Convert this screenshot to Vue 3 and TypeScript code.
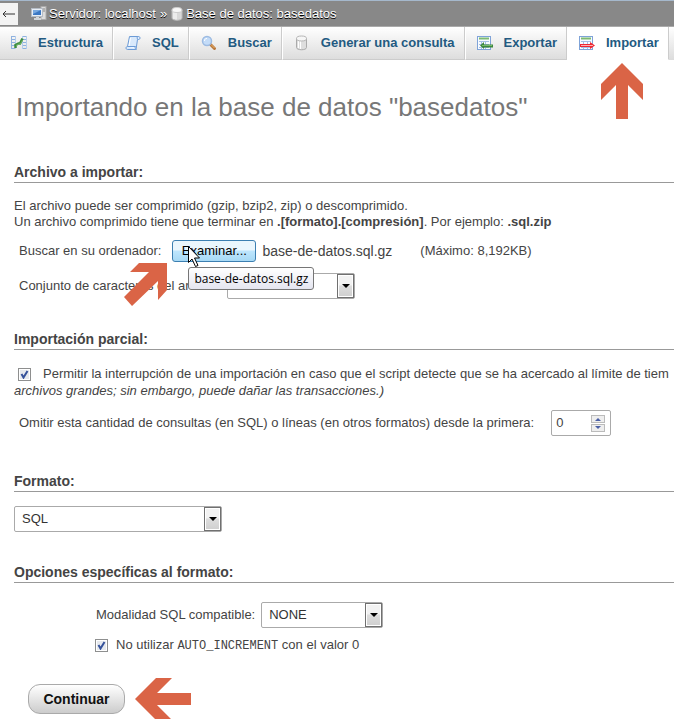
<script setup lang="ts">
import { ref } from 'vue'

interface Tab {
  label: string
  icon: 'structure' | 'sql' | 'search' | 'query' | 'export' | 'import'
}

const tabs: Tab[] = [
  { label: 'Estructura', icon: 'structure' },
  { label: 'SQL', icon: 'sql' },
  { label: 'Buscar', icon: 'search' },
  { label: 'Generar una consulta', icon: 'query' },
  { label: 'Exportar', icon: 'export' },
  { label: 'Importar', icon: 'import' },
]

const activeTab = ref('Importar')
const fileName = ref('base-de-datos.sql.gz')
const charset = ref('utf-8')
const allowInterrupt = ref(true)
const skipQueries = ref(0)
const format = ref('SQL')
const compat = ref('NONE')
const noAutoIncrement = ref(true)

function step(delta: number) {
  skipQueries.value = Math.max(0, skipQueries.value + delta)
}
</script>

<template>
  <div class="page">
    <header class="crumbs">
      <button class="back" type="button" aria-label="Ocultar panel">
        <svg width="14" height="8" viewBox="0 0 14 8" aria-hidden="true">
          <path d="M1 4h12M4 1L1 4l3 3" fill="none" stroke="#333" />
        </svg>
      </button>
      <svg class="server-icon" width="16" height="16" viewBox="0 0 16 16" aria-hidden="true">
        <rect x="10" y="0.5" width="5" height="13" fill="#dcdcdc" stroke="#aaa" />
        <path d="M11 3h3M11 5h3" stroke="#888" />
        <rect x="0.5" y="2.5" width="11" height="8" fill="#e8eef5" stroke="#b5bcc5" />
        <rect x="2" y="4" width="8" height="5" fill="#3b78c4" />
        <path d="M2 4h8L2 8z" fill="#78a9e0" />
        <path d="M5 11h3v1h2v2H3v-2h2z" fill="#d0d4d8" />
      </svg>
      <a href="#" class="crumb">Servidor: localhost</a>
      <span class="crumb sep">»</span>
      <svg class="db-icon" width="12" height="14" viewBox="0 0 12 14" aria-hidden="true">
        <path d="M1 3v8c0 3 10 3 10 0V3z" fill="#d9d9d9" stroke="#bbb" />
        <path d="M3 5v7M5 5.500v7" stroke="#fff" />
        <ellipse cx="6" cy="3" rx="5" ry="2.500" fill="#f8f8f8" stroke="#ccc" />
      </svg>
      <a href="#" class="crumb">Base de datos: basedatos</a>
    </header>

    <nav class="tabs">
      <a
        v-for="tab in tabs"
        :key="tab.label"
        href="#"
        class="tab"
        :class="{ active: tab.label === activeTab }"
        @click.prevent="activeTab = tab.label"
      >
        <svg width="16" height="16" viewBox="0 0 16 16" aria-hidden="true">
          <template v-if="tab.icon === 'structure'">
            <path d="M0.500 1v13M0.500 1.500h4M0.500 4.500h4M0.500 7.500h4M0.500 10.500h4M0.500 13.500h4M11 1.500h4M11 4.500h4M11 7.500h4M11 10.500h4M11 13.500h4" fill="none" stroke="#8fb2df" />
            <path d="M4.500 1v13M11.500 1v13M15.500 1v13" stroke="#b4cdec" />
            <path d="M4.500 13V10l3-1.500 1.500 0 2.500-5" fill="none" stroke="#3d8c3d" stroke-width="2.500" />
            <path d="M5 10.500l3-1.500 1.500 0 2-4" fill="none" stroke="#72b566" />
          </template>
          <template v-else-if="tab.icon === 'sql'">
            <path d="M4.500 1.500h9c2 0 2 3 0 3h-1L11 14.500H2.500c-2 0-2-3 0-3z" fill="#d9e9fb" stroke="#6c9bd6" />
            <path d="M2.500 11.500h8c-1 1 0 3 1 3M13.500 1.500c-2 0-1.500 3 0 3" fill="#eef6ff" stroke="#6c9bd6" />
            <path d="M5.500 3L4 11" stroke="#fff" />
          </template>
          <template v-else-if="tab.icon === 'search'">
            <path d="M9.500 9.500l4 4" stroke="#b9773b" stroke-width="3" stroke-linecap="round" />
            <path d="M10 9.500l3.500 3.500" stroke="#e8b56e" />
            <circle cx="6" cy="6" r="4.500" fill="#c4dcf8" stroke="#9dbbe2" stroke-width="1.500" />
            <path d="M3.500 6c0-2 1-2.500 2.500-2.500" fill="none" stroke="#fff" />
          </template>
          <template v-else-if="tab.icon === 'query'">
            <path d="M2.500 3.500v9c0 3 10 3 10 0v-9z" fill="#dedede" stroke="#aaa" />
            <path d="M4.500 5v8M6.500 6v8" stroke="#fff" />
            <ellipse cx="7.500" cy="3.500" rx="5" ry="2.500" fill="#f6f6f6" stroke="#b5b5b5" />
          </template>
          <template v-else>
            <rect x="0.500" y="1.500" width="13" height="13" fill="#f7fbff" stroke="#7fa3d8" />
            <path d="M2 3.500h10" stroke="#7dbb72" stroke-width="2" />
            <path d="M2 6.500h10M2 9.500h10M2 12.500h10M4.500 6v8M8.500 6v8" stroke="#a5bfe5" />
            <path v-if="tab.icon === 'export'" d="M3 10.500l4-3.500v2.500h9v3H7V14z" fill="#3c883c" />
            <path v-if="tab.icon === 'export'" d="M5 10.500h10" stroke="#79b96d" />
            <path v-if="tab.icon === 'import'" d="M1 9h10V7l5 3.500-5 3.500v-2H1z" fill="#ee2832" />
            <path v-if="tab.icon === 'import'" d="M2 10.500h12" stroke="#ffb0b0" />
          </template>
        </svg>
        <span>{{ tab.label }}</span>
        <svg v-if="tab.icon === 'import'" class="pointer up" width="42" height="56" viewBox="0 0 42 56" aria-hidden="true">
          <path d="M21 0l21 21v16L27 22v34H15V22L0 37V21z" />
        </svg>
      </a>
    </nav>

    <main>
      <h1>Importando en la base de datos "basedatos"</h1>

      <section class="file">
        <h2>Archivo a importar:</h2>
        <p class="intro">
          El archivo puede ser comprimido (gzip, bzip2, zip) o descomprimido.<br />
          Un archivo comprimido tiene que terminar en <b>.[formato].[compresión]</b>. Por ejemplo: <b>.sql.zip</b>
        </p>
        <div class="row browse">
          <label for="browse">Buscar en su ordenador:</label>
          <div class="browse-anchor">
            <button id="browse" class="browse-button" type="button">Examinar...</button>
            <svg class="pointer diagonal" width="43" height="43" viewBox="0 0 43 43" aria-hidden="true">
              <path d="M15 0h28v27l-9 10V18L8 43l-8-9L25 9H6z" />
            </svg>
            <div class="tooltip" role="tooltip">{{ fileName }}</div>
            <svg class="cursor" width="14" height="23" viewBox="0 0 14 23" aria-hidden="true">
              <path d="M1.500 1.500v16l3.500-3.500 3.500 7.500 2.500-1-3.500-7.500h5z" fill="#fff" stroke="#000" />
            </svg>
          </div>
          <span class="file-name">{{ fileName }}</span>
          <span>(Máximo: 8,192KB)</span>
        </div>
        <div class="row charset">
          <label for="charset">Conjunto de caracteres del archivo:</label>
          <div class="select small">
            <select id="charset" v-model="charset"><option>utf-8</option></select>
          </div>
        </div>
      </section>

      <section class="partial">
        <h2>Importación parcial:</h2>
        <div class="row interrupt">
          <input id="interrupt" v-model="allowInterrupt" type="checkbox" />
          <label for="interrupt">Permitir la interrupción de una importación en caso que el script detecte que se ha acercado al límite de tiem</label>
        </div>
        <p class="note">archivos grandes; sin embargo, puede dañar las transacciones.)</p>
        <div class="row skip">
          <label for="skip">Omitir esta cantidad de consultas (en SQL) o líneas (en otros formatos) desde la primera:</label>
          <div class="number">
            <input id="skip" v-model.number="skipQueries" type="number" min="0" />
            <div class="spinner">
              <button type="button" aria-label="Aumentar" @click="step(1)">
                <svg width="8" height="4" viewBox="0 0 8 4"><path d="M1 4l3-3 3 3z" fill="#4a5fa5" /></svg>
              </button>
              <button type="button" aria-label="Disminuir" @click="step(-1)">
                <svg width="8" height="4" viewBox="0 0 8 4"><path d="M1 0l3 3 3-3z" fill="#4a5fa5" /></svg>
              </button>
            </div>
          </div>
        </div>
      </section>

      <section class="format">
        <h2><label for="format">Formato:</label></h2>
        <div class="select large">
          <select id="format" v-model="format"><option>SQL</option></select>
        </div>
      </section>

      <section class="options">
        <h2>Opciones específicas al formato:</h2>
        <div class="row compat">
          <label for="compat">Modalidad SQL compatible:</label>
          <div class="select medium">
            <select id="compat" v-model="compat"><option>NONE</option></select>
          </div>
        </div>
        <div class="row auto">
          <input id="auto" v-model="noAutoIncrement" type="checkbox" />
          <label for="auto">No utilizar <code>AUTO_INCREMENT</code> con el valor 0</label>
        </div>
      </section>

      <footer>
        <button class="submit" type="submit">Continuar</button>
        <svg class="pointer" width="56" height="41" viewBox="0 0 56 41" aria-hidden="true">
          <path d="M0 21L21 0h16L22 15h34v12H22l14 14H20z" />
        </svg>
      </footer>
    </main>
  </div>
</template>

<style>
body {
  margin: 0;
  background: #fff;
}
</style>

<style scoped>
.page {
  overflow: hidden;
  font: 13px/16px 'Liberation Sans', Arial, sans-serif;
  color: #444;
}
.page * {
  box-sizing: border-box;
}
.page svg {
  display: block;
  flex: none;
}
button,
input,
select {
  font: inherit;
  color: inherit;
  margin: 0;
}
.crumbs {
  display: flex;
  align-items: center;
  height: 26px;
  border-top: 1px solid #a5b8cc;
  background: #888;
}
.back {
  width: 18px;
  height: 22px;
  padding: 0 0 0 2px;
  border: 0;
  background: #f3f3f3;
}
.server-icon {
  margin: 0 2px 0 13px;
}
.crumb {
  color: #fff;
  text-decoration: none;
  text-shadow: 0 1px 0 #000;
  white-space: nowrap;
}
.sep {
  margin: 0 4px;
}
.db-icon {
  margin-right: 3px;
}
.tabs {
  display: flex;
  height: 34px;
  border-top: 1px solid #aaa;
  background: linear-gradient(#fff, #dcdcdc);
}
.tab {
  position: relative;
  display: flex;
  flex: none;
  align-items: center;
  gap: 11px;
  padding: 0 9px 0 11px;
  border-left: 1px solid #fff;
  border-right: 1px solid #ccc;
  border-bottom: 1px solid #ccc;
  color: #235a81;
  font-weight: bold;
  text-decoration: none;
  white-space: nowrap;
}
.tab:first-child {
  border-left: 0;
}
.tab.active {
  background: #fff;
  border-bottom-color: #fff;
}
.pointer {
  fill: #da6446;
}
.up {
  position: absolute;
  top: 36px;
  left: 33px;
}
main {
  padding: 31px 0 0 14px;
}
h1 {
  margin: 0 0 41px 2px;
  font-size: 26px;
  line-height: 32px;
  font-weight: normal;
  color: #777;
  white-space: nowrap;
}
h2 {
  margin: 0;
  padding-bottom: 2px;
  border-bottom: 1px solid #999;
  font-size: 14px;
  line-height: 16px;
}
p {
  margin: 0;
  white-space: nowrap;
}
.intro {
  margin-top: 15px;
}
.row {
  display: flex;
  align-items: center;
  white-space: nowrap;
}
.browse {
  margin-top: 10px;
  padding-left: 5px;
}
.browse-anchor {
  position: relative;
  margin: 0 6px 0 11px;
}
.browse-button {
  display: block;
  width: 84px;
  height: 22px;
  padding: 0;
  border: 1px solid #3c7fb1;
  border-radius: 3px;
  background: linear-gradient(#eaf6fd 45%, #bee6fd 50%, #a7d9f5);
  color: #000;
}
.diagonal {
  position: absolute;
  z-index: 1;
  top: 23px;
  left: -48px;
}
.tooltip {
  position: absolute;
  z-index: 2;
  top: 27px;
  left: 16px;
  padding: 3px 5px;
  border: 1px solid #767676;
  border-radius: 3px;
  background: linear-gradient(#fff, #e4e5f0);
  color: #000;
  font: 12px/15px 'Open Sans', sans-serif;
}
.cursor {
  position: absolute;
  z-index: 3;
  top: 5px;
  left: 15px;
}
.file-name {
  margin-right: 28px;
  font-size: 14px;
}
.charset {
  gap: 3px;
  margin-top: 11px;
  padding-left: 5px;
}
.select {
  position: relative;
  height: 26px;
}
.select.small {
  width: 128px;
}
.select.large {
  width: 208px;
  margin-top: 14px;
}
.select.medium {
  width: 122px;
}
select {
  appearance: none;
  width: 100%;
  height: 100%;
  padding: 0 24px 0 7px;
  border: 1px solid #aaa;
  border-radius: 2px;
  background: #fff;
  color: #333;
}
.select::before {
  content: '';
  position: absolute;
  box-sizing: border-box;
  top: 1px;
  right: 1px;
  width: 17px;
  height: 24px;
  border: 1px solid #707070;
  box-shadow: inset 0 0 0 1px #fff;
  background: linear-gradient(#f2f2f2 45%, #ddd 50%, #cfcfcf);
  pointer-events: none;
}
.select::after {
  content: '';
  position: absolute;
  top: 11px;
  right: 5px;
  border: solid transparent;
  border-width: 4px 4px 0;
  border-top-color: #000;
  pointer-events: none;
}
.partial {
  margin-top: 32px;
}
input[type='checkbox'] {
  flex: none;
  appearance: none;
  width: 13px;
  height: 13px;
  border: 1px solid #8e8f8f;
  background: #e6e9ee;
  box-shadow: inset 0 0 0 1px #fff;
}
input[type='checkbox']:checked {
  background-image: url("data:image/svg+xml,%3Csvg xmlns='http://www.w3.org/2000/svg' viewBox='0 0 11 11'%3E%3Cpath d='M2.500 5l2 3.500 4-6.500' fill='none' stroke='%2335529b' stroke-width='2'/%3E%3C/svg%3E");
}
.interrupt {
  gap: 12px;
  margin-top: 16px;
  padding-left: 4px;
}
.note {
  font-style: italic;
  margin-top: 1px;
}
.skip {
  gap: 17px;
  margin-top: 11px;
  padding-left: 5px;
}
.number {
  display: flex;
  align-items: center;
  width: 60px;
  height: 26px;
  padding-right: 5px;
  border: 1px solid #aaa;
  border-radius: 2px;
}
.number input {
  flex: 1;
  min-width: 0;
  padding: 0 0 0 4px;
  border: 0;
  background: none;
  appearance: textfield;
}
.number input::-webkit-inner-spin-button {
  display: none;
}
.spinner {
  display: grid;
  gap: 1px;
}
.spinner button {
  display: grid;
  place-items: center;
  width: 14px;
  height: 8px;
  padding: 0;
  border: 1px solid #bbb;
  background: #eee;
}
.format {
  margin-top: 37px;
}
.options {
  margin-top: 32px;
}
.compat {
  gap: 6px;
  margin-top: 19px;
  padding-left: 82px;
}
.auto {
  gap: 8px;
  margin-top: 9px;
  padding-left: 81px;
}
code {
  font: 12px/14px 'Liberation Mono', monospace;
}
footer {
  display: flex;
  align-items: center;
  gap: 10px;
  margin-top: 25px;
  padding-left: 14px;
}
.submit {
  width: 97px;
  height: 30px;
  padding: 0;
  border: 1px solid #aaa;
  border-radius: 12px;
  background: linear-gradient(#fff, #ccc);
  color: #111;
  font-size: 14px;
  font-weight: bold;
}
</style>
